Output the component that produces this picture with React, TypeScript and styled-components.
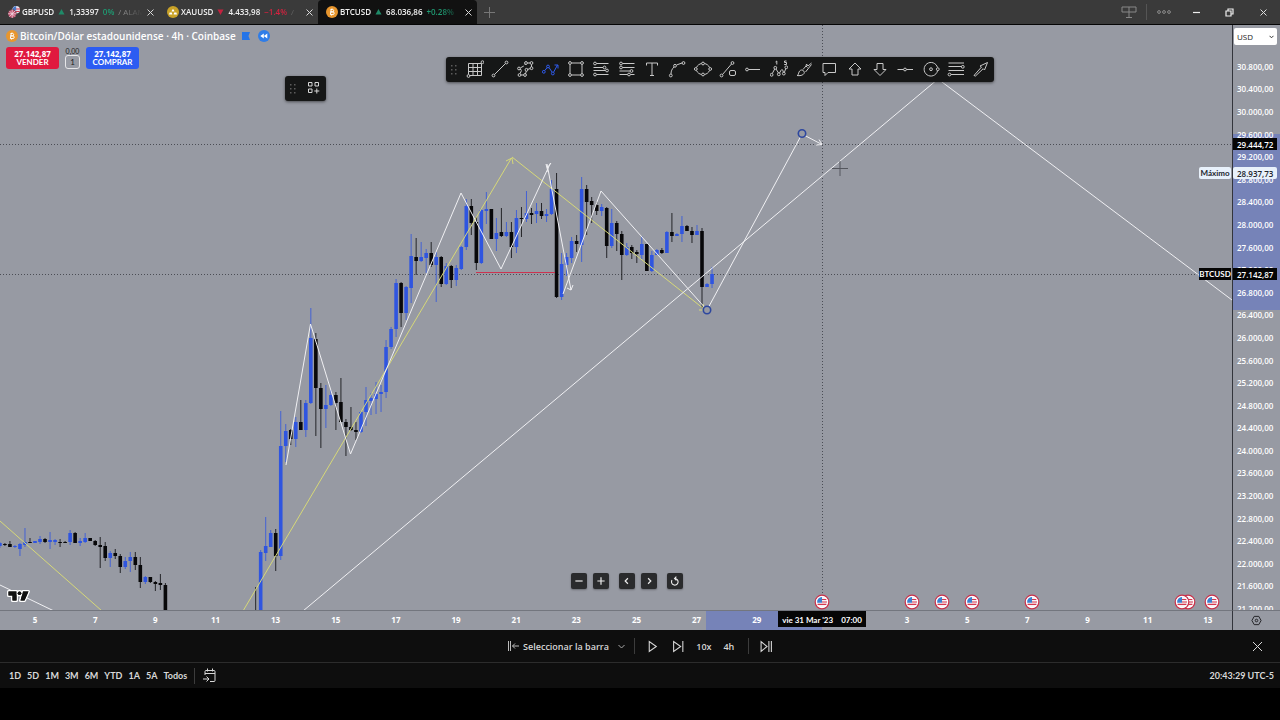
import React from "react";
import styled, { createGlobalStyle, css } from "styled-components";

const GlobalStyle = createGlobalStyle`
  *, *::before, *::after { box-sizing: border-box; }
  body {
    margin: 0;
    background: #000;
    font-family: "Lato", "Open Sans", sans-serif;
    font-size: 10px;
    color: #fff;
  }
  button, select, input { font: inherit; color: inherit; }
  button { border: 0; padding: 0; background: none; cursor: pointer; }
  svg { display: block; }
`;

const BLUE = "#2f55e0";
const INK = "#08080a";
const SANS = '"Open Sans", "Noto Sans", sans-serif';

const Page = styled.div`
  display: flex;
  flex-direction: column;
  min-height: 100vh;
  padding-bottom: 32px;
`;

/* ---------- window bar ---------- */

const WindowBar = styled.header`
  display: flex;
  height: 25px;
  flex: none;
  background: #3a3a3a;
  border-bottom: 1px solid #050505;
`;

const Tab = styled.div<{ $active?: boolean }>`
  display: flex;
  align-items: center;
  width: 159px;
  padding: 0 3px 0 8px;
  gap: 2px;
  background: ${(p) => (p.$active ? "#111111" : "transparent")};
  border-radius: 4px 4px 0 0;
`;

const TabLink = styled.a`
  display: flex;
  flex: 1;
  min-width: 0;
  align-items: center;
  gap: 4px;
  overflow: hidden;
  white-space: nowrap;
  color: #f0f0f0;
  font-family: ${SANS};
  font-size: 8px;
  font-weight: 600;
  line-height: 12px;
  text-decoration: none;
  mask-image: linear-gradient(90deg, #000 84%, transparent);
`;

const Change = styled.span<{ $up?: boolean }>`
  color: ${(p) => (p.$up ? "#1f9a72" : "#d4223f")};
`;

const Dim = styled.span`
  color: #8a8a8a;
  font-weight: 400;
`;

const Arrow = styled.svg`
  width: 7px;
  height: 6px;
  flex: none;
`;

const BarButton = styled.button<{ $w: number }>`
  display: flex;
  align-items: center;
  justify-content: center;
  width: ${(p) => p.$w}px;
  height: 24px;
  flex: none;
`;

const WindowTools = styled.div`
  display: flex;
  align-items: center;
  margin-left: auto;
`;

const BarDivider = styled.span`
  width: 1px;
  height: 16px;
  background: #555;
`;

/* ---------- chart ---------- */

const Workspace = styled.main`
  display: grid;
  flex: 1;
  grid-template-columns: minmax(0, 1fr) 48px;
  grid-template-rows: minmax(585px, 1fr) 20px;
  background: #979aa3;
`;

const ChartPane = styled.section`
  position: relative;
  overflow: hidden;
  min-width: 0;
`;

const ChartCanvas = styled.svg`
  position: absolute;
  inset: 0;
  width: 100%;
  height: 100%;
`;

const Legend = styled.div`
  position: absolute;
  top: 4px;
  left: 6px;
`;

const LegendTitle = styled.h1`
  display: flex;
  align-items: center;
  gap: 2px;
  height: 14px;
  margin: 0 0 4px;
  font-family: ${SANS};
  font-size: 10px;
  font-weight: 600;
  line-height: 14px;
  white-space: nowrap;
`;

const LegendMarks = styled.span`
  display: flex;
  gap: 7px;
  margin-left: 3px;
`;

const Orders = styled.div`
  display: flex;
  gap: 6px;
  align-items: flex-start;
`;

const OrderButton = styled.button<{ $buy?: boolean }>`
  width: 53px;
  height: 22px;
  border-radius: 3px;
  background: ${(p) => (p.$buy ? "#2c5cf2" : "#e0193f")};
  font-size: 8px;
  font-weight: 700;
  line-height: 9px;
  color: #fff;
`;

const OrderPrice = styled.span`
  display: block;
  font-family: ${SANS};
`;

const Spread = styled.label`
  display: flex;
  flex-direction: column;
  align-items: center;
  width: 15px;
  font-size: 7px;
  line-height: 8px;
  color: #1c1c1c;
`;

const Lots = styled.input`
  width: 15px;
  height: 14px;
  padding: 0;
  border: 1px solid #e6e6e8;
  border-radius: 3px;
  background: transparent;
  text-align: center;
  font-size: 8px;
`;

const floating = css`
  position: absolute;
  display: flex;
  align-items: center;
  height: 25px;
  border-radius: 3px;
  background: #161717;
  box-shadow: 0 1px 3px rgba(0, 0, 0, 0.5);
`;

const DrawingBar = styled.div`
  ${floating}
  top: 32px;
  left: 446px;
  width: 548px;
`;

const LayoutBar = styled.div`
  ${floating}
  top: 51px;
  left: 285px;
  width: 41px;
`;

const Grip = styled.svg`
  width: 16px;
  height: 12px;
  flex: none;
`;

const ToolButton = styled.button`
  display: flex;
  flex: 1;
  height: 24px;
  padding-bottom: 2px;
  align-items: center;
  justify-content: center;
`;

const NavBar = styled.nav`
  position: absolute;
  bottom: 21px;
  left: calc(50% - 45px);
  display: flex;
  gap: 6px;
`;

const NavGroup = styled.div`
  display: flex;
  gap: 6px;
  margin-right: 4px;
`;

const NavButton = styled.button`
  display: flex;
  align-items: center;
  justify-content: center;
  width: 16px;
  height: 16px;
  border-radius: 2px;
  background: #2a2b2d;
  box-shadow: 0 1px 2px rgba(0, 0, 0, 0.3);
`;

const Brand = styled.svg`
  position: absolute;
  left: 6px;
  bottom: 6px;
`;

const PriceScale = styled.aside`
  position: relative;
  display: flex;
  flex-direction: column;
  overflow: hidden;
  border-left: 1px solid #33353c;
  font-family: ${SANS};
`;

const RangeBand = styled.div`
  position: absolute;
  top: 109px;
  left: 0;
  right: 0;
  height: 176px;
  background: #7683b8;
`;

const Currency = styled.label`
  position: relative;
  display: block;
  margin: 3px 3px 10px 1px;
`;

const CurrencySelect = styled.select`
  display: block;
  width: 100%;
  height: 17px;
  padding: 0 3px;
  border: 0;
  border-radius: 2px;
  appearance: none;
  background: #fff;
  color: #222;
  font-size: 8px;
`;

const SelectArrow = styled.svg`
  position: absolute;
  right: 3px;
  top: 7px;
  pointer-events: none;
`;

const Prices = styled.ol`
  position: relative;
  display: flex;
  flex: 1;
  flex-direction: column;
  margin: 0 0 -10px;
  padding: 0 0 0 4px;
  list-style: none;
  font-size: 8px;
  font-weight: 600;
`;

const Price = styled.li`
  display: flex;
  flex: 1;
  align-items: center;
`;

const Tag = styled.span<{ $top: number; $light?: boolean; $name?: boolean }>`
  position: absolute;
  top: ${(p) => p.$top}px;
  ${(p) =>
    p.$name
      ? "right: 1px; width: 32px; justify-content: center; font-family: Lato, sans-serif;"
      : "left: 0; width: 44px; padding-left: 4px;"}
  display: flex;
  align-items: center;
  height: 12px;
  font-size: 8px;
  font-weight: ${(p) => (p.$name ? 700 : 600)};
  background: ${(p) => (p.$light ? "#e8f1fb" : "#050505")};
  color: ${(p) => (p.$light ? "#20242c" : "#fff")};
  border-radius: ${(p) => (p.$light ? "2px" : "0")};
`;

const TimeScale = styled.div`
  position: relative;
  min-width: 0;
  overflow: hidden;
  border-top: 1px solid #73767e;
`;

const TimeBand = styled.div`
  position: absolute;
  top: 0;
  bottom: 0;
  left: 706px;
  width: 116px;
  background: #7683b8;
`;

const Dates = styled.ol`
  position: relative;
  display: flex;
  height: 17px;
  margin: 0 -6px 0 0;
  padding: 0 0 0 5px;
  list-style: none;
  font-family: ${SANS};
  font-size: 8px;
  font-weight: 700;
`;

const DateCell = styled.li<{ $span: number }>`
  display: flex;
  flex: ${(p) => p.$span} 1 0;
  min-width: 0;
  align-items: center;
  justify-content: center;
`;

const TimeTag = styled.span`
  position: absolute;
  top: 0;
  left: 778px;
  display: flex;
  align-items: center;
  justify-content: center;
  gap: 8px;
  width: 88px;
  height: 16px;
  padding-top: 2px;
  background: #060606;
  font-size: 8px;
  font-weight: 700;
`;

const ScaleSettings = styled.button`
  display: flex;
  align-items: center;
  justify-content: center;
  border-top: 1px solid #73767e;
  border-left: 1px solid #33353c;
`;

/* ---------- bottom bars ---------- */

const ReplayBar = styled.section`
  display: grid;
  grid-template-columns: 1fr auto 1fr;
  align-items: center;
  height: 33px;
  flex: none;
  background: #0e0e0e;
  border-bottom: 1px solid #2c2c2c;
  font-family: ${SANS};
`;

const ReplayControls = styled.div`
  display: flex;
  grid-column: 2;
  align-items: center;
`;

const ReplayButton = styled.button<{ $w?: number }>`
  display: flex;
  align-items: center;
  justify-content: center;
  gap: 4px;
  width: ${(p) => (p.$w ? `${p.$w}px` : "auto")};
  height: 20px;
  color: #d6d6d6;
  font-size: 9px;
  font-weight: 600;
`;

const Divider = styled.span<{ $gap: number }>`
  width: 1px;
  height: 16px;
  margin: 0 ${(p) => p.$gap}px;
  background: #3c3c3c;
`;

const CloseReplay = styled(ReplayButton)`
  grid-column: 3;
  justify-self: end;
  margin-right: 13px;
`;

const RangeBar = styled.footer`
  display: flex;
  align-items: center;
  height: 25px;
  flex: none;
  padding: 0 6px;
  background: #0e0e0e;
  color: #d8d8d8;
  font-size: 9px;
  font-weight: 700;
`;

const RangeButton = styled.button`
  height: 20px;
  margin: 0 3px;
`;

const Clock = styled.time`
  margin-left: auto;
`;

/* ---------- data ---------- */

/* Each candle: direction (1 up, 0 down), body top, body bottom, high, low. */
type Candle = [number, number, number, number, number];

const EARLY: Candle[] = [
  [1, 543, 546, 542, 548], [0, 544, 545, 543, 546], [0, 544, 547, 541, 547], [1, 546, 547, 545, 548],
  [1, 544, 549, 543, 556], [1, 542, 545, 528, 547], [0, 542, 543, 538, 543], [1, 541, 543, 541, 543],
  [1, 539, 542, 536, 544], [0, 539, 542, 538, 543], [1, 540, 542, 532, 549], [1, 540, 542, 539, 545],
  [0, 542, 543, 539, 547], [0, 542, 543, 541, 543], [1, 533, 542, 530, 545], [0, 533, 543, 532, 543],
  [1, 541, 543, 538, 546], [1, 538, 542, 533, 543], [0, 538, 541, 538, 541], [0, 541, 545, 540, 546],
  [0, 545, 547, 537, 568], [0, 546, 558, 542, 561], [1, 553, 558, 551, 567], [0, 553, 556, 549, 559],
  [0, 556, 567, 554, 573], [1, 561, 567, 557, 569], [1, 557, 561, 552, 572], [0, 557, 565, 552, 570],
  [0, 565, 582, 557, 588], [1, 577, 582, 576, 584], [0, 577, 582, 577, 583], [0, 582, 584, 581, 591],
  [0, 583, 585, 574, 590], [0, 585, 611, 583, 611],
];

const RALLY: Candle[] = [
  [0, 610, 611, 587, 611], [1, 552, 611, 550, 611], [1, 546, 553, 517, 561], [1, 533, 547, 530, 547],
  [0, 533, 556, 529, 571], [1, 446, 556, 411, 560], [1, 431, 446, 424, 462], [0, 430, 439, 429, 445],
  [1, 422, 439, 417, 447], [0, 422, 430, 400, 430], [1, 403, 430, 400, 437], [1, 338, 403, 308, 404],
  [0, 339, 388, 333, 436], [0, 388, 409, 383, 448], [1, 405, 409, 385, 428], [1, 395, 405, 390, 406],
  [0, 395, 403, 392, 430], [0, 402, 422, 378, 422], [0, 422, 427, 419, 456], [0, 427, 430, 407, 431],
  [0, 430, 432, 422, 440], [1, 412, 432, 411, 433], [1, 400, 412, 387, 426], [1, 398, 401, 393, 415],
  [1, 394, 399, 382, 414], [1, 392, 394, 385, 412], [1, 347, 392, 340, 398], [1, 329, 347, 327, 349],
  [1, 283, 329, 279, 337], [0, 283, 313, 282, 327], [1, 287, 313, 286, 320], [1, 256, 288, 234, 303],
  [0, 257, 261, 238, 275], [1, 257, 261, 242, 262], [1, 253, 258, 249, 273], [0, 253, 265, 242, 267],
  [1, 257, 265, 252, 302], [0, 257, 284, 256, 287], [1, 266, 284, 263, 285], [0, 266, 280, 265, 288],
  [1, 268, 280, 265, 286], [1, 247, 269, 246, 270], [1, 206, 247, 199, 250], [0, 206, 223, 199, 235],
  [0, 222, 263, 217, 270], [1, 210, 263, 208, 264], [1, 209, 211, 192, 224], [0, 209, 239, 209, 239],
  [1, 233, 239, 218, 251], [0, 232, 236, 208, 237], [1, 232, 236, 222, 237], [0, 232, 247, 222, 258],
  [1, 218, 247, 210, 253], [0, 218, 219, 207, 237], [1, 213, 219, 191, 222], [0, 213, 215, 208, 224],
  [1, 211, 214, 203, 223], [0, 211, 216, 203, 219], [1, 214, 216, 209, 222], [1, 189, 214, 180, 215],
  [0, 189, 297, 173, 298], [1, 264, 297, 253, 300], [1, 257, 265, 253, 276], [1, 241, 258, 237, 263],
  [0, 241, 244, 235, 252], [1, 189, 245, 177, 262], [0, 189, 202, 185, 235], [0, 201, 205, 197, 223],
  [0, 205, 211, 202, 215], [1, 207, 211, 204, 216], [0, 208, 246, 207, 258], [1, 223, 246, 209, 248],
  [0, 223, 234, 221, 251], [0, 234, 255, 231, 280], [1, 247, 255, 243, 256], [0, 247, 253, 245, 259],
  [0, 252, 254, 250, 263], [1, 244, 255, 236, 259], [0, 244, 271, 244, 271], [1, 255, 271, 251, 272],
  [1, 250, 255, 249, 255], [0, 250, 253, 248, 254], [1, 232, 253, 231, 253], [0, 232, 236, 213, 242],
  [1, 234, 236, 233, 236], [1, 226, 234, 216, 242], [0, 226, 231, 225, 231], [0, 231, 235, 227, 243],
  [1, 231, 235, 225, 235], [0, 231, 287, 228, 308], [1, 284, 287, 283, 287], [1, 274, 284, 267, 288],
];

const DATES: [string, number][] = [
  ["5", 2], ["7", 2], ["9", 2], ["11", 2], ["13", 2], ["15", 2], ["17", 2], ["19", 2], ["21", 2],
  ["23", 2], ["25", 2], ["27", 2], ["29", 2], ["", 3], ["3", 2], ["5", 2], ["7", 2], ["9", 2], ["11", 2], ["13", 2],
];

const PRICES = Array.from({ length: 25 }, (_, i) => {
  const n = 30800 - i * 400;
  return `${Math.floor(n / 1000)}.${String(n % 1000).padStart(3, "0")},00`;
});

const EVENTS = [822, 912, 942, 972, 1032, 1188, 1182, 1212];
const RANGES = ["1D", "5D", "1M", "3M", "6M", "YTD", "1A", "5A", "Todos"];

/* ---------- drawings ---------- */

const Candles = ({ data, start }: { data: Candle[]; start: number }) => (
  <g>
    {data.map(([up, top, bottom, high, low], i) => {
      const x = (start + i) * 5.015;
      const color = up ? BLUE : INK;
      return (
        <g key={i} fill={color}>
          <rect x={x - 0.6} y={high} width={1} height={low - high} opacity={0.8} />
          <rect x={x - 1.9} y={top} width={3.6} height={bottom - top} />
        </g>
      );
    })}
  </g>
);

const EventFlag = ({ x }: { x: number }) => (
  <g transform={`translate(${x} 602)`}>
    <circle r={6.800} fill="#fff" stroke="#c9304a" strokeWidth={1.2} />
    <circle r={5} fill="#f4f1f5" />
    <path d="M0 -2.5h4.3M0 0h5M-4.4 2.3h8.8" stroke="#d5384e" strokeWidth={1.2} />
    <path d="M-4.8 .8A5 5 0 0 1 0 -5V.8z" fill="#3a7fd0" />
  </g>
);

const Chart = () => (
  <ChartCanvas viewBox="0 25 1232 585" preserveAspectRatio="xMinYMin slice" role="img" aria-label="BTCUSD 4h">
    <g stroke="#4b4d55" strokeWidth={1} strokeDasharray="1 2">
      <path d="M0 144.5H1232M0 274.5H1232M822.5 25V611" />
    </g>
    <Candles data={EARLY} start={0} />
    <Candles data={RALLY} start={51} />
    <path d="M476 272.5H555" stroke="#cc3350" strokeWidth={1.2} />
    <g fill="none" stroke="#d6d878" strokeWidth={1}>
      <path d="M0 521 102 611M243 611 511.500 158M512 157 704 309" />
      <path d="M506 161l6-3 1 6M699 310l6 0-2-6" />
    </g>
    <g fill="none" stroke="#f0f0f3" strokeWidth={1}>
      <path d="M0 585 54 611M303 611 938 79 1232 300" />
      <path d="M286 465 310.500 324 350.500 454 461 193 501 269 550.500 163" />
      <path d="M547 164 571 290M567 288l4 2 2-5M546 164l2 8M547 168l4-5" />
      <path d="M563 294 601 191 707 310 802 134 822 144.500M816 145l6-.5-3-5" />
    </g>
    <g fill="#979aa3" stroke="#2d479f" strokeWidth={1.6}>
      <circle cx={707} cy={310} r={3.7} />
      <circle cx={802} cy={133.500} r={3.7} />
    </g>
    <path d="M832 168.500h16M840 161v15" stroke="#55575e" strokeWidth={1} />
    {EVENTS.map((x) => (
      <EventFlag key={x} x={x} />
    ))}
  </ChartCanvas>
);

const node = (x: number, y: number) => `M${x - 1.4} ${y}a1.4 1.4 0 1 0 2.8 0a1.4 1.4 0 1 0 -2.8 0`;

const TOOLS: { name: string; d: string; active?: boolean }[] = [
  { name: "Cuadrícula", d: `M2.500 3.500h13M15.500 3.500v12M15.500 15.500h-12M2.500 3.500v11M7 3.500v12M11.500 3.500v12M2.500 7.500h13M2.500 11.500h13${node(16.5, 2.2)}${node(2.5, 16)}` },
  { name: "Línea de tendencia", d: `M3.500 14.500 14.500 3.500${node(2.5, 15.5)}${node(15.5, 2.5)}` },
  { name: "Ruta", d: `M4.500 7.800 7.800 6M8.800 5l.7-1M11.500 3h2.500M15.500 4.500v2.500M14.300 8.500l-3 1M10.300 11l-.8 3M7.500 15h-2.500M4 13.700l1.500-3.200M3.500 9.200l2 .8${node(10, 3)}${node(15.5, 3)}${node(3, 8.5)}${node(15.5, 8.2)}${node(10.5, 9.8)}${node(9, 15)}${node(3.5, 15)}` },
  { name: "Trayectoria", d: `M2.800 10.500 5.200 7.500M7 7.500l3 4.500M11.700 12 15.500 5M12.500 5h3.500v3.500${node(1.8, 11.8)}${node(6, 6.5)}${node(10.8, 13.5)}`, active: true },
  { name: "Rectángulo", d: `M4.500 3h9M4.500 15h9M3 4.500v9M15 4.500v9${node(3, 3)}${node(15, 3)}${node(3, 15)}${node(15, 15)}` },
  { name: "Retroceso", d: `M4.500 3.500H16.500M1.500 7.500h9.500M1.500 10.500h12M4.500 14.500H16.500${node(3, 3.5)}${node(12.5, 7.5)}${node(15, 10.5)}${node(3, 14.5)}` },
  { name: "Extensión", d: `M4.500 3.500H16.500M4.500 7.500H16.500M1.500 11h10.500M12.500 14.500h4M1.500 14.500h8${node(3, 3.5)}${node(3, 7.5)}${node(13.5, 11)}${node(11, 14.5)}` },
  { name: "Texto", d: "M3.500 5.500V3h11v2.500M9 3v12.500M7 15.500h4" },
  { name: "Arco", d: `M3 14c0-3 1-5 3-7M8.500 5l5.500-2${node(2.8, 15.5)}${node(7, 5.8)}${node(15.5, 3)}` },
  { name: "Elipse", d: `M2.500 7.500c1-2.500 3-3.500 5-4M10.500 3.500c2 .5 4 1.500 5 4M15.500 10.500c-1 2.500-3 3.500-5 4M7.500 14.500c-2-.5-4-1.500-5-4${node(1.8, 9)}${node(16.2, 9)}${node(9, 3.5)}${node(9, 14.5)}` },
  { name: "Línea y forma", d: `M3.500 14.500 12.500 4${node(2.5, 15.5)}${node(13.5, 3)}M12 10.500h3q1.500 0 1.500 1.500v2q0 1.500-1.500 1.500h-3q-1.500 0-1.500-1.500v-2q0-1.500 1.500-1.500` },
  { name: "Rayo horizontal", d: `M4.500 9.500H16${node(3, 9.5)}` },
  { name: "Ondas de Elliott", d: `M2.300 13.500 4.700 9M6 9l2.500 4M9.500 13l2-3.500M12.500 9.500l1 3M14.300 12.500l1.500-4${node(1.6, 14.8)}${node(5.3, 7.8)}${node(8.8, 14.3)}${node(13.8, 13.6)}${node(16.3, 7.3)}M5.500 2l1.300-1v3.500M16.500 1h-2v1.500h2v2h-2.300` },
  { name: "Pincel", d: "M2 15.500c2 0 1-5 4.500-5.500 2 0 3.500 2 2.500 3.500-1 2-4.500 2.500-7 2M8 9.500 11 6l1.500 1.500M10.500 12 16.500 4.500M11 6l.5-2 1.500 2 3.500-3" },
  { name: "Comentario", d: "M3 3.500h12.500v9H8l-3 3v-3H3z" },
  { name: "Flecha arriba", d: "M9 3l6 6h-3v6H6V9H3z" },
  { name: "Flecha abajo", d: "M9 15.500l6-6h-3V3.500H6v6H3z" },
  { name: "Línea horizontal", d: `M1.500 9.500h6M10.500 9.500h6.500${node(9, 9.5)}` },
  { name: "Círculo", d: `M15.500 7.500A6.800 6.800 0 1 0 15.500 11${node(9, 9.2)}${node(15.8, 9.2)}` },
  { name: "Canal de Fibonacci", d: `M1.500 3h15.500M1.500 6.500h13M1.500 10.500h15.500M4 14.500h13${node(15.8, 6.8)}${node(2.5, 14.5)}` },
  { name: "Flecha", d: "M2 15.500l7.500-8.500-1.500-1L15.500 2.500 12.500 10l-1.300-1.300L3.500 16z" },
];

const Icon = ({ d, size = 18, color = "#d8d8d8", width = 1, box = 18 }: { d: string; size?: number; color?: string; width?: number; box?: number }) => (
  <svg width={size} height={size} viewBox={`0 0 ${box} ${box}`} fill="none" stroke={color} strokeWidth={width} aria-hidden="true">
    <path d={d} />
  </svg>
);

const GripDots = () => (
  <Grip viewBox="0 0 16 12" fill="#5c5c5c" aria-hidden="true">
    {[2, 6, 10].map((y) => (
      <React.Fragment key={y}>
        <rect x={5} y={y - 1} width={1.500} height={1.500} />
        <rect x={9} y={y - 1} width={1.500} height={1.500} />
      </React.Fragment>
    ))}
  </Grip>
);

const Coin = () => (
  <svg width={12} height={12} viewBox="0 0 12 12" aria-hidden="true">
    <circle cx={6} cy={6} r={6} fill="#e8962e" />
    <path d="M4.500 3.500h2a1.200 1.200 0 0 1 0 2.400h-1.800 2.200a1.300 1.300 0 0 1 0 2.600h-2.600M5.200 3.500l-.8 5M6 2.500v1M5.500 8.500v1" fill="none" stroke="#fff" strokeWidth={1} />
  </svg>
);

const GoldCoin = () => (
  <svg width={12} height={12} viewBox="0 0 12 12" aria-hidden="true">
    <circle cx={6} cy={6} r={6} fill="#c9a227" />
    <path d="M4.600 5.500l.6-2h1.600l.6 2zM2 8.500l.6-2h2.200l.6 2zM6.600 8.500l.6-2h2.200l.6 2z" fill="#fff" />
  </svg>
);

const PairFlags = () => (
  <svg width={12} height={12} viewBox="0 0 12 12" aria-hidden="true">
    <circle cx={8.200} cy={3.800} r={3.800} fill="#e9e4ee" />
    <path d="M8 3h4M8 5.500h3.500" stroke="#d5384e" />
    <path d="M4.600 4.500A3.800 3.800 0 0 1 8.200 0v4.500z" fill="#4a78c9" />
    <circle cx={4.200} cy={7.800} r={4.200} fill="#c3506e" stroke="#3a3a3a" strokeWidth={0.500} />
    <path d="M4.200 3.600v8.400M0 7.800h8.400M1.300 4.900l5.800 5.800M7.100 4.900l-5.800 5.800" stroke="#f0d8e0" strokeWidth={0.800} />
  </svg>
);

const CROSS = "M1.500 1.500l6 6M7.500 1.500l-6 6";

type TabInfo = { symbol: string; price: string; change: string; rest: string; up: boolean; icon: React.ReactNode };

const TABS: TabInfo[] = [
  { symbol: "GBPUSD", price: "1,33397", change: "0%", rest: "/ ALAM", up: true, icon: <PairFlags /> },
  { symbol: "XAUUSD", price: "4.433,98", change: "−1.4%", rest: "/", up: false, icon: <GoldCoin /> },
  { symbol: "BTCUSD", price: "68.036,86", change: "+0.28%", rest: "", up: true, icon: <Coin /> },
];

export default function App() {
  return (
    <Page>
      <GlobalStyle />
      <WindowBar>
        {TABS.map((t) => (
          <Tab key={t.symbol} $active={t.symbol === "BTCUSD"}>
            {t.icon}
            <TabLink href={`#${t.symbol}`}>
              {t.symbol}
              <Arrow viewBox="0 0 7 6" fill={t.up ? "#1f8a68" : "#c4223f"}>
                <path d={t.up ? "M3.500 0 6.500 5.500h-6z" : "M3.500 6 .5 .5h6z"} />
              </Arrow>
              <span>{t.price}</span>
              <Change $up={t.up}>{t.change}</Change>
              {t.rest && <Dim>{t.rest}</Dim>}
            </TabLink>
            <BarButton $w={11} aria-label={`Cerrar ${t.symbol}`}>
              <Icon d={CROSS} size={9} box={9} />
            </BarButton>
          </Tab>
        ))}
        <BarButton $w={24} aria-label="Nueva pestaña">
          <Icon d="M5.500 0v11M0 5.500h11" size={11} box={11} color="#777" />
        </BarButton>
        <WindowTools>
          <BarButton $w={34} aria-label="Diseño">
            <Icon d="M1 3h14v5H1zM8 3v10M5 13.500h6" size={16} box={16} color="#888" />
          </BarButton>
          <BarDivider />
          <BarButton $w={33} aria-label="Más">
            <Icon d={`${node(2, 7)}${node(7, 7)}${node(12, 7)}`} size={14} box={14} color="#8c8c8c" />
          </BarButton>
          <BarButton $w={33} aria-label="Minimizar">
            <Icon d="M1 4.500h7" size={9} box={9} color="#eee" width={1.2} />
          </BarButton>
          <BarButton $w={33} aria-label="Restaurar">
            <Icon d="M1 3h5v5H1zM3 3V1h5v5H6" size={9} box={9} color="#eee" width={1.2} />
          </BarButton>
          <BarButton $w={34} aria-label="Cerrar">
            <Icon d={CROSS} size={9} box={9} color="#ddd" />
          </BarButton>
        </WindowTools>
      </WindowBar>

      <Workspace>
        <ChartPane>
          <Chart />
          <Legend>
            <LegendTitle>
              <Coin />
              Bitcoin/Dólar estadounidense · 4h · Coinbase
              <LegendMarks>
                <svg width={10} height={12} viewBox="0 0 10 12" aria-hidden="true">
                  <path d="M1 2h8L7.500 6 9 10H1z" fill="#2474e8" />
                </svg>
                <svg width={12} height={12} viewBox="0 0 12 12" aria-hidden="true">
                  <circle cx={6} cy={6} r={6} fill="#2f7de8" />
                  <path d="M5.800 3.500v5L2.300 6zM9.300 3.500v5L5.800 6z" fill="#fff" />
                </svg>
              </LegendMarks>
            </LegendTitle>
            <Orders>
              <OrderButton>
                <OrderPrice>27.142,87</OrderPrice>
                VENDER
              </OrderButton>
              <Spread>
                0,00
                <Lots defaultValue="1" />
              </Spread>
              <OrderButton $buy>
                <OrderPrice>27.142,87</OrderPrice>
                COMPRAR
              </OrderButton>
            </Orders>
          </Legend>

          <LayoutBar>
            <GripDots />
            <ToolButton aria-label="Agregar herramienta">
              <Icon d="M1.500 1.500h3.500v3.500H1.500zM8 1.500h3.500v3.500H8zM1.500 8h3.500v3.500H1.500zM9.800 7.500v5M7.300 10h5" size={13} box={13} />
            </ToolButton>
          </LayoutBar>

          <DrawingBar role="toolbar" aria-label="Herramientas de dibujo">
            <GripDots />
            {TOOLS.map((t) => (
              <ToolButton key={t.name} aria-label={t.name}>
                <Icon d={t.d} color={t.active ? "#2f5cf0" : "#c8c8c8"} />
              </ToolButton>
            ))}
          </DrawingBar>

          <NavBar aria-label="Desplazamiento">
            <NavGroup>
              <NavButton aria-label="Alejar"><Icon d="M1.500 5.500h8" size={10} box={11} width={1.3} color="#eee" /></NavButton>
              <NavButton aria-label="Acercar"><Icon d="M1.500 5.500h8M5.500 1.500v8" size={10} box={11} width={1.3} color="#eee" /></NavButton>
            </NavGroup>
            <NavGroup>
              <NavButton aria-label="Atrás"><Icon d="M6.500 2.500l-3 3 3 3" size={10} box={11} width={1.3} color="#eee" /></NavButton>
              <NavButton aria-label="Adelante"><Icon d="M4.500 2.500l3 3-3 3" size={10} box={11} width={1.3} color="#eee" /></NavButton>
            </NavGroup>
            <NavButton aria-label="Restablecer"><Icon d="M2.200 4.500A3.600 3.600 0 1 0 5.500 2.800M7 .8l-2 2 2 2" size={10} box={11} width={1.2} color="#eee" /></NavButton>
          </NavBar>

          <Brand width={24} height={16} viewBox="0 0 24 16" aria-label="TradingView">
            <g fill="#111" stroke="#fff" strokeWidth={3} strokeLinejoin="round" paintOrder="stroke">
              <path d="M2.500 3.500h8v9H6.500v-5h-4zM17 3.500h5.500l-4 9h-4z" />
              <circle cx={13.500} cy={5.300} r={1.800} />
            </g>
            <g fill="#111">
              <path d="M2.500 3.500h8v9H6.500v-5h-4zM17 3.500h5.500l-4 9h-4z" />
              <circle cx={13.500} cy={5.300} r={1.800} />
            </g>
          </Brand>

          <Tag $name $light $top={142}>Máximo</Tag>
          <Tag $name $top={243}>BTCUSD</Tag>
        </ChartPane>

        <PriceScale>
          <RangeBand />
          <Currency>
            <CurrencySelect aria-label="Moneda" defaultValue="USD">
              <option>USD</option>
              <option>EUR</option>
            </CurrencySelect>
            <SelectArrow width={5} height={4} viewBox="0 0 5 4" fill="none" stroke="#333">
              <path d="M.5 .8l2 2 2-2" />
            </SelectArrow>
          </Currency>
          <Prices>
            {PRICES.map((p) => (
              <Price key={p}>{p}</Price>
            ))}
          </Prices>
          <Tag $top={113}>29.444,72</Tag>
          <Tag $light $top={142}>28.937,73</Tag>
          <Tag $top={243}>27.142,87</Tag>
        </PriceScale>

        <TimeScale>
          <TimeBand />
          <Dates>
            {DATES.map(([label, span], i) => (
              <DateCell key={i} $span={span}>{label}</DateCell>
            ))}
          </Dates>
          <TimeTag>
            <span>vie 31 Mar '23</span>
            <span>07:00</span>
          </TimeTag>
        </TimeScale>
        <ScaleSettings aria-label="Ajustes de escala">
          <Icon d={`M3.500 1.500h5l2.500 4.500-2.500 4.500h-5L1 6z${node(6, 6)}`} size={11} box={12} color="#1d1d20" />
        </ScaleSettings>
      </Workspace>

      <ReplayBar>
        <ReplayControls>
          <ReplayButton>
            <Icon d="M1.500 1v10M3.500 1v10M5.500 6h6.500M8 3.500 5.500 6 8 8.500" size={12} box={12} color="#bbb" />
            Seleccionar la barra
          </ReplayButton>
          <ReplayButton $w={25} aria-label="Opciones">
            <Icon d="M1.500 3l3 3 3-3" size={9} box={9} color="#aaa" />
          </ReplayButton>
          <Divider $gap={0} />
          <ReplayButton $w={36} aria-label="Reproducir"><Icon d="M3 1.500v9L9.500 6z" size={13} box={12} /></ReplayButton>
          <ReplayButton $w={16} aria-label="Avanzar"><Icon d="M1.500 1.500v9L8 6zM10 1v10" size={13} box={12} /></ReplayButton>
          <ReplayButton $w={34}>10x</ReplayButton>
          <ReplayButton $w={16}>4h</ReplayButton>
          <Divider $gap={11} />
          <ReplayButton aria-label="Ir al tiempo real"><Icon d="M1 1.500v9L6.500 6zM8.200 1v10M10.500 1v10" size={13} box={12} /></ReplayButton>
        </ReplayControls>
        <CloseReplay $w={20} aria-label="Cerrar reproducción">
          <Icon d="M1 1l9 9M10 1l-9 9" size={11} box={11} />
        </CloseReplay>
      </ReplayBar>

      <RangeBar>
        {RANGES.map((r) => (
          <RangeButton key={r}>{r}</RangeButton>
        ))}
        <Divider $gap={4} />
        <RangeButton aria-label="Ir a la fecha">
          <Icon d="M3 7V3.500q0-1 1-1h8q1 0 1 1v9q0 1-1 1H8M3 5.500h10M5.500 .5v3M10.500 .5v3M1 11h5M4.500 8.500 7 11l-2.500 2.500" size={15} box={15} />
        </RangeButton>
        <Clock>20:43:29 UTC-5</Clock>
      </RangeBar>
    </Page>
  );
}
